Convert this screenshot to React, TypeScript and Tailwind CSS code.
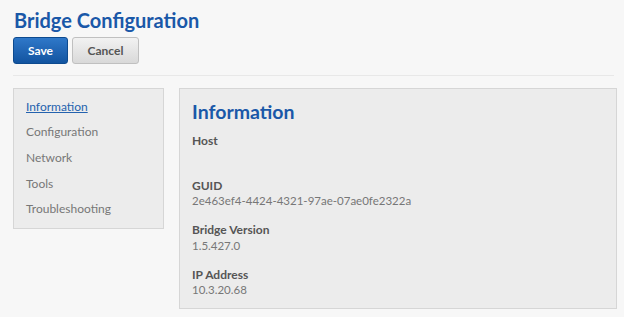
import React from 'react'

const navItems = ['Information', 'Configuration', 'Network', 'Tools', 'Troubleshooting']

const fields = [
  { label: 'Host', value: '' },
  { label: 'GUID', value: '2e463ef4-4424-4321-97ae-07ae0fe2322a' },
  { label: 'Bridge Version', value: '1.5.427.0' },
  { label: 'IP Address', value: '10.3.20.68' },
]

export default function App() {
  return (
    <div className="w-[624px] h-[317px] overflow-hidden bg-[#f7f7f7] font-['Lato','Open_Sans',sans-serif] text-[#777]">
      <div className="pl-[13px] pr-[7px] pt-[6px]">
        <h1 className="text-[20px] leading-[28px] font-bold text-[#1a58a8] pl-px">Bridge Configuration</h1>
        {/* actions */}
        <div className="flex gap-[4px] mt-[3px]">
          <button className="w-[55px] h-[27px] rounded-[3px] border border-[#0d4a8f] bg-gradient-to-b from-[#2f78c9] to-[#1254a0] text-white text-[12px] font-bold">
            Save
          </button>
          <button className="w-[67px] h-[27px] rounded-[3px] border border-[#c0c0c0] bg-gradient-to-b from-[#f2f2f2] to-[#d9d9d9] text-[#555] text-[12px] font-bold">
            Cancel
          </button>
        </div>
        <div className="mt-[11px] h-px bg-[#e8e8e8] mr-[3px]" />

        <div className="flex gap-[15px] mt-[12px]">
          {/* sidebar */}
          <div className="w-[151px] h-[141px] shrink-0 bg-[#ececec] border border-[#d6d6d6] pl-[12px] pt-[5px]">
            {navItems.map((item, i) => (
              <div key={item} className="h-[25.6px] flex items-center text-[12px]">
                <span className={i === 0 ? 'text-[#2462ae] underline' : 'text-[#777]'}>{item}</span>
              </div>
            ))}
          </div>

          {/* main panel */}
          <div className="flex-1 h-[221px] bg-[#ececec] border border-[#d6d6d6] pl-[12px] pt-[11px]">
            <h2 className="text-[19.5px] leading-[24px] font-bold text-[#1a58a8]">Information</h2>
            <div className="mt-[9px]">
              {fields.map(f => (
                <div key={f.label} className="h-[44.5px] text-[12px] leading-[15.5px]">
                  <div className="font-bold text-[#555]">{f.label}</div>
                  <div className="text-[11.5px]">{f.value}</div>
                </div>
              ))}
            </div>
          </div>
        </div>
      </div>
    </div>
  )
}
